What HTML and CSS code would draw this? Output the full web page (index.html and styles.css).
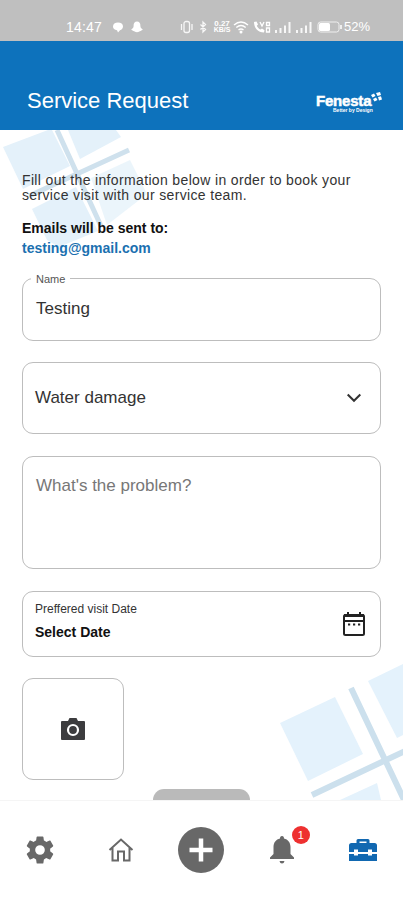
FILE: index.html
```html
<!DOCTYPE html>
<html lang="en">
<head>
  <meta charset="UTF-8" />
  <meta name="viewport" content="width=device-width, initial-scale=1.0" />
  <title>Service Request</title>
  <link rel="stylesheet" href="styles.css">
</head>
<body>
  <!-- Status bar -->
  <div class="status">
    <span class="time">14:47</span>
    <svg class="status-left" width="32" height="14" viewBox="0 0 32 14" fill="#fff">
      <path d="M6 2.5c3 0 5 1.500 5 4 0 2-1.500 3.200-3 3.700L6 12.500 5 10.300C2.500 10 1 8.500 1 6.500c0-2.500 2-4 5-4z"/>
      <path d="M25 1.500c2.300 0 3.500 1.600 3.400 4.500 0 1.700 1 2.700 2.400 3.400-.6.900-1.600.9-2.200 1.500-1.200.1-2 1.300-3.600 1.300s-2.400-1.200-3.600-1.300c-.6-.6-1.600-.6-2.200-1.500 1.400-.7 2.400-1.700 2.400-3.400-.1-2.900 1.100-4.500 3.400-4.500z"/>
    </svg>
    <svg class="vibrate" width="30" height="14" viewBox="0 0 30 14" fill="none" stroke="#f7f7f7" stroke-width="1.300">
      <rect x="4" y="1.500" width="5.500" height="11" rx="2"/>
      <path d="M1.500 4v6M12 4v6M20.500 4.500l5 5-2.500 2.500V2l2.500 2.500-5 5"/>
    </svg>
    <span class="speed"><b>0.27</b><b>KB/S</b></span>
    <svg class="wifi" width="16" height="14" viewBox="0 0 16 14" fill="none" stroke="#fff" stroke-width="1.400">
      <path d="M1 5q7-6 14 0M3.300 7.500q4.700-4 9.400 0M5.500 10q2.500-2 5 0"/>
      <circle cx="8" cy="12" r=".8" fill="#fff"/>
    </svg>
    <svg class="call" width="19" height="14" viewBox="0 0 19 14" fill="#fff">
      <path d="M1 2l2.500-.5 1.500 3-1.200 1.300c.8 1.900 2 3 3.700 3.800L9 8.400l2.500 1.800-.5 2.300C5 12.500 1 8 1 2z"/>
      <path d="M7 2l2 4 2-4M13.500 2.500h3v3h-3zM13.500 8h3v4h-3z" fill="none" stroke="#fff" stroke-width="1.300"/>
    </svg>
    <svg class="bars" width="40" height="14" viewBox="0 0 40 14" fill="#f7f7f7">
      <path d="M1 10h2v3H1zM5.500 8h2v5h-2zM10 5.500h2V13h-2zM14.500 2h2v11h-2zM22 10h2v3h-2zM26.500 8h2v5h-2zM31 5.500h2V13h-2zM35.500 2h2v11h-2z"/>
    </svg>
    <svg class="battery" width="26" height="14" viewBox="0 0 26 14">
      <rect x="1" y="2" width="21" height="10" rx="2.500" fill="none" stroke="#efefef"/>
      <rect x="2" y="3" width="11" height="8" rx="1.500" fill="#fff"/>
      <path d="M24 5v4" stroke="#fff" stroke-width="1.500"/>
    </svg>
    <span class="percent">52%</span>
  </div>

  <!-- Header -->
  <header class="header">
    <h1>Service Request</h1>
    <div class="logo">
      <span class="logo-name">Fenesta</span>
      <span class="logo-tag">Better by Design</span>
      <svg class="logo-mark" width="12" height="13" viewBox="0 0 12 13" fill="#fff">
        <path d="M1 3l3-1.500L5.500 4 2.500 5.500zM6 1l4-1 1 3-3.500 1zM3 7l3-1.500 1.500 2.500-3 1.500zM8 5l3-.8 1 3.300-3 1z"/>
      </svg>
    </div>
  </header>

  <!-- Form -->
  <main class="content">
    <svg class="deco deco-top" width="150" height="120" viewBox="0 0 150 120">
      <g fill="#e4f1fa">
        <path d="M3 17L48 0h4l18 36-47 23z"/>
        <path d="M68 0h48l5 7-41 22z"/>
        <path d="M32 79l44-22 22 44-39 16-12-7z"/>
        <path d="M91 48l39-18 17 34-40 31z" opacity=".75"/>
      </g>
      <path d="M57 0l44 96M29 66l100-46" stroke="#cfe1ed" stroke-width="5" fill="none"/>
    </svg>
    <svg class="deco deco-bottom" width="125" height="138" viewBox="0 0 125 138">
      <g fill="#e4f2fc">
        <path d="M2 61l55-26 28 57-55 27z"/>
        <path d="M90 19l35-17v71l-6 3z"/>
        <path d="M62 138l37-17 4 17z"/>
      </g>
      <path d="M73 26l54 114M34 133l93-44" stroke="#cce0ed" stroke-width="6" fill="none"/>
    </svg>

    <p class="intro">Fill out the information below in order to book your<br>service visit with our service team.</p>
    <p class="sent">Emails will be sent to:</p>
    <p class="email">testing@gmail.com</p>

    <div class="field name-field">
      <span class="label">Name</span>
      <span class="value">Testing</span>
    </div>
    <div class="field select-field">
      <span class="value water">Water damage</span>
      <svg width="16" height="12" viewBox="0 0 16 12" fill="none" stroke="#333" stroke-width="2">
        <path d="M1.700 2.500L8 8.800l6.300-6.300"/>
      </svg>
    </div>
    <div class="field problem-field">
      <span class="placeholder">What's the problem?</span>
    </div>
    <div class="field date-field">
      <div class="date-text">
        <span class="date-label">Preffered visit Date</span>
        <span class="date-value">Select Date</span>
      </div>
      <svg width="24" height="26" viewBox="0 0 24 26" fill="none" stroke="#222">
        <rect x="2" y="4" width="20" height="20" rx="1.500" stroke-width="2"/>
        <path d="M2 4.500h20" stroke-width="3"/>
        <path d="M2 10h20" stroke-width="2"/>
        <path d="M6 1v3M18 1v3" stroke-width="2"/>
        <path d="M6 13.500h2.200M11 13.500h2.200M16 13.500h2.200" stroke-width="2.200"/>
      </svg>
    </div>
    <div class="field photo-field">
      <svg width="24" height="22" viewBox="0 0 24 22">
        <path d="M1 3h6l1.500-3h7L17 3h6q1 0 1 1v17q0 1-1 1H1q-1 0-1-1V4q0-1 1-1z" fill="#3c3c3e"/>
        <circle cx="12" cy="12" r="5" fill="#3c3c3e" stroke="#fff" stroke-width="2.200"/>
      </svg>
    </div>
    <div class="sheet-handle"></div>
  </main>

  <!-- Bottom navigation -->
  <nav class="nav">
    <a class="nav-item"><svg width="34" height="34" viewBox="0 0 24 24" fill="#686868">
      <path fill-rule="evenodd" d="M19.140 12.940c.04-.3.060-.61.060-.94s-.02-.64-.07-.94l2.030-1.580c.18-.14.230-.41.120-.61l-1.920-3.320c-.12-.22-.37-.29-.59-.22l-2.390.96c-.5-.38-1.030-.7-1.620-.94L14.400 2.810c-.04-.24-.24-.41-.48-.41h-3.840c-.24 0-.43.170-.47.410L9.250 5.350c-.59.240-1.130.570-1.620.940l-2.390-.96c-.22-.08-.47 0-.59.220L2.740 8.870c-.12.210-.08.470.120.610l2.030 1.580c-.05.300-.09.630-.09.940s.02.640.070.940l-2.030 1.580c-.18.140-.23.410-.12.610l1.920 3.320c.12.220.37.290.59.220l2.390-.96c.5.380 1.030.7 1.620.94l.36 2.540c.05.240.24.410.48.410h3.840c.24 0 .44-.17.470-.41l.36-2.540c.59-.24 1.130-.56 1.620-.94l2.390.96c.22.080.47 0 .59-.22l1.920-3.320c.12-.22.070-.47-.12-.61zM12 15.400a3.400 3.400 0 1 1 0-6.800 3.400 3.400 0 0 1 0 6.800z"/>
    </svg></a>
    <a class="nav-item"><svg width="26" height="26" viewBox="0 0 26 26" fill="none" stroke="#686868" stroke-width="2">
      <path d="M1.500 13L13 2.500 24.500 13M4.500 11v12.500H10v-9h6v9h5.500V11"/>
    </svg></a>
    <a class="nav-item"><svg width="46" height="46" viewBox="0 0 46 46">
      <circle cx="23" cy="23" r="23" fill="#686868"/>
      <path d="M23 11.500v23M11.500 23h23" stroke="#fff" stroke-width="4.500"/>
    </svg></a>
    <a class="nav-item bell">
      <svg width="24" height="28" viewBox="0 0 24 28" fill="#686868">
        <path d="M12 0c1.500 0 2 1 2 2.400 4 1 6.500 4 6.500 8.600v7L24 21.500V23H0v-1.500L3.500 18v-7c0-4.600 2.500-7.600 6.500-8.600C10 1 10.500 0 12 0zM9.500 25h5q-.5 2.500-2.500 2.500T9.500 25z"/>
      </svg>
      <span class="badge">1</span>
    </a>
    <a class="nav-item"><svg width="28" height="24" viewBox="0 0 28 24" fill="#1168b1">
      <path fill-rule="evenodd" d="M7.500 5V2.500Q7.500 1 9 1h10q1.500 0 1.500 1.500V5h5q2.500 0 2.500 2.500V14h-5v-2.500h-4V14H9v-2.500H5V14H0V7.500Q0 5 2.500 5zM10.500 5h7V3.500h-7zM0 16h5v1.500h4V16h10v1.500h4V16h5v7H0z"/>
    </svg></a>
  </nav>
</body>
</html>
```
FILE: styles.css
```css
/* ===== Base reset ===== */
* { box-sizing: border-box; margin: 0; padding: 0; }
body {
  width: 403px;
  height: 900px;
  overflow: hidden;
  display: flex;
  flex-direction: column;
  background: #fff;
  color: #333;
  font-family: "Liberation Sans", Arial, sans-serif;
}
svg { display: block; flex: none; }

/* ===== Status bar ===== */
.status {
  height: 41px;
  background: #bfbfbf;
  color: #fff;
  display: flex;
  align-items: center;
  padding: 12px 0 0 66px;
  font-size: 14px;
}
.time { width: 46px; letter-spacing: 0.2px; }
.status-left { margin-right: 36px; }
.speed {
  display: flex;
  flex-direction: column;
  align-items: center;
  width: 20px;
  margin-left: 2px;
  font-size: 8px;
  line-height: 7px;
}
.speed b + b { font-size: 7px; line-height: 6px; }
.wifi { margin-left: 1px; }
.call { margin-left: 4px; }
.bars { margin-left: 2px; }
.battery { margin-left: 3px; }
.percent { font-size: 13px; margin-left: 1px; }

/* ===== Header ===== */
.header {
  height: 89px;
  background: #0d72bc;
  color: #fff;
  display: flex;
  justify-content: space-between;
  padding: 46px 21px 0 27px;
}
h1 {
  font-size: 22px;
  line-height: 28px;
  font-weight: 400;
}
.logo { position: relative; width: 66px; padding-top: 6px; }
.logo-name {
  display: block;
  font-size: 15px;
  line-height: 15px;
  font-weight: 700;
  letter-spacing: -0.2px;
  -webkit-text-stroke: 0.5px #fff;
}
.logo-tag {
  display: block;
  font-size: 5px;
  line-height: 5px;
  font-weight: 700;
  padding-left: 17px;
  white-space: nowrap;
}
.logo-mark { position: absolute; right: 0; top: 5px; }

/* ===== Form ===== */
.content {
  position: relative;
  height: 670px;
  padding: 43px 22px 0;
  display: flex;
  flex-direction: column;
  overflow: hidden;
}
.content > * { position: relative; flex: none; }
.content > .deco { position: absolute; }
.deco-top { left: 0; top: 0; }
.deco-bottom { right: 0; bottom: 0; }
.intro { font-size: 14px; line-height: 15px; letter-spacing: 0.35px; white-space: nowrap; }
.sent { font-size: 14px; line-height: 20px; font-weight: 700; color: #111; margin-top: 15px; }
.email { font-size: 14px; line-height: 20px; font-weight: 700; color: #1b70b0; }

.field {
  display: flex;
  border: 1px solid #bdbdbd;
  border-radius: 11px;
  background: #fff;
  padding: 0 13px;
}
.value, .placeholder { font-size: 17px; line-height: 20px; }
.name-field { height: 63px; margin-top: 20px; padding-top: 20px; }
.label {
  position: absolute;
  left: 8px;
  top: -7px;
  padding: 0 5px;
  background: #fff;
  font-size: 11px;
  line-height: 14px;
  color: #555;
}
.select-field {
  height: 72px;
  margin-top: 21px;
  align-items: center;
  justify-content: space-between;
  padding: 0 18px 0 12px;
}
.problem-field { height: 113px; margin-top: 22px; padding-top: 19px; }
.placeholder { color: #777; }
.date-field {
  height: 66px;
  margin-top: 22px;
  align-items: center;
  justify-content: space-between;
  padding: 0 14px 0 12px;
}
.date-text { display: flex; flex-direction: column; }
.date-label { font-size: 12px; line-height: 18px; margin-top: -7px; }
.date-value { font-size: 14px; line-height: 18px; margin-top: 5px; font-weight: 700; color: #111; }
.photo-field {
  width: 102px;
  height: 102px;
  margin-top: 21px;
  align-items: center;
  justify-content: center;
}
.sheet-handle {
  width: 97px;
  height: 13px;
  margin: 9px 0 0 131px;
  background: #bababa;
  border-radius: 11px 11px 0 0;
}

/* ===== Bottom navigation ===== */
.nav {
  height: 100px;
  display: flex;
  border-top: 1px solid #f5f5f5;
  background: #fff;
}
.nav-item {
  position: relative;
  width: 80.6px;
  height: 98px;
  display: flex;
  align-items: center;
  justify-content: center;
}
.badge {
  position: absolute;
  left: 50px;
  top: 25px;
  width: 18px;
  height: 18px;
  border-radius: 50%;
  background: #ee3030;
  color: #fff;
  font-size: 11px;
  line-height: 18px;
  text-align: center;
}
```
